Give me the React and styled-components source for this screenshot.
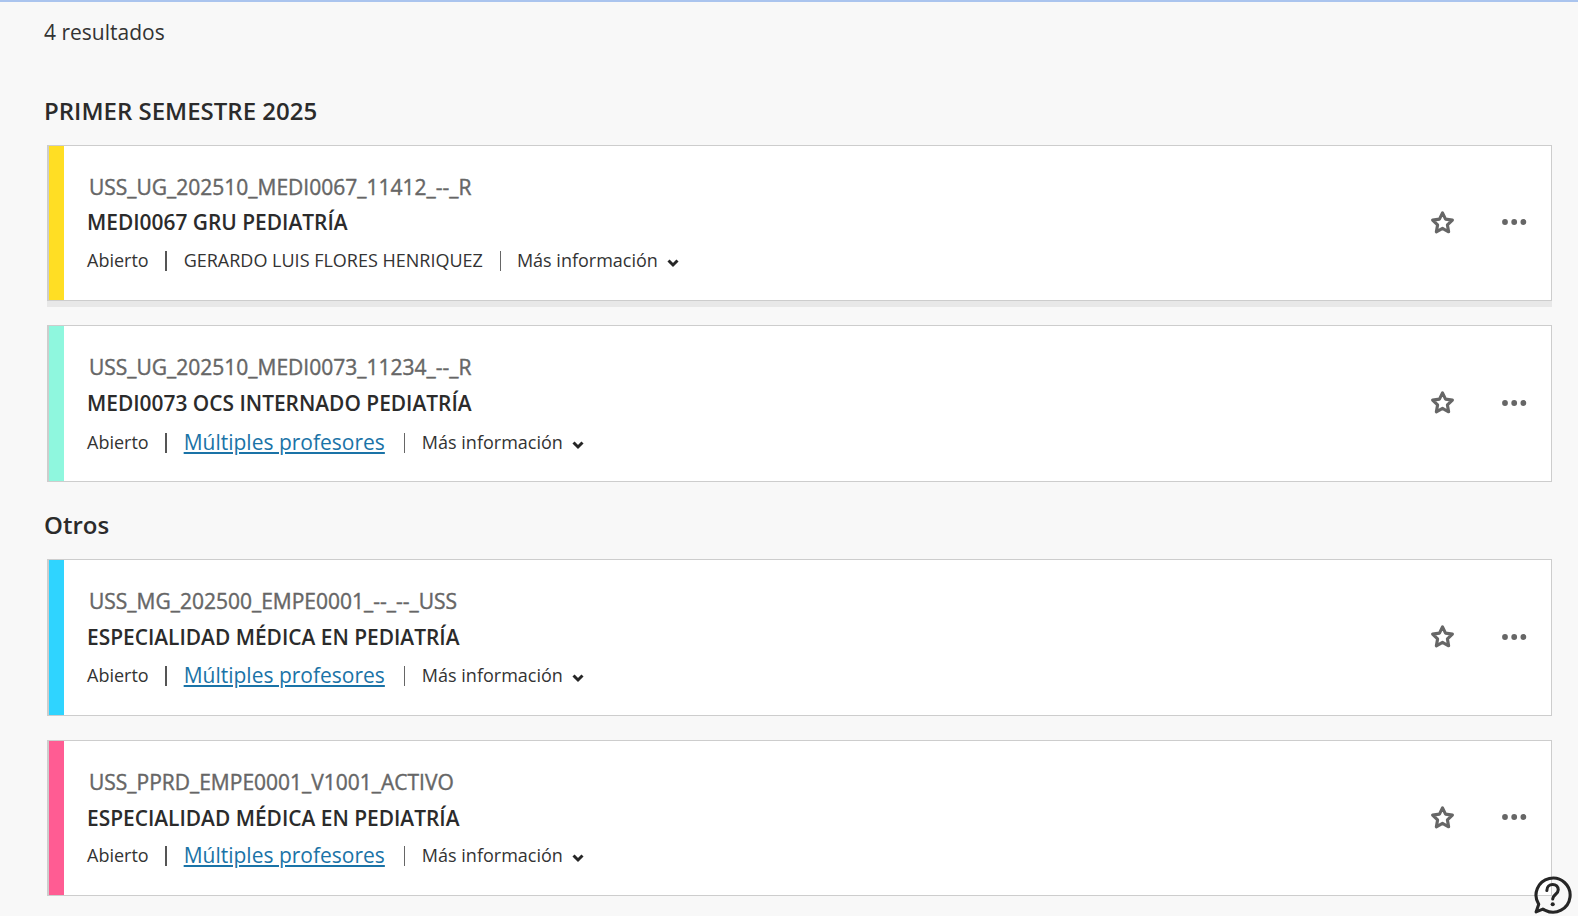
import React from "react";
import styled, { createGlobalStyle } from "styled-components";

const Global = createGlobalStyle`
    html, body {
        margin: 0;
        padding: 0;
        background: #f8f8f8;
        font-family: "Open Sans", sans-serif;
        color: #262626;
    }
`;

const Page = styled.div`
    position: relative;
    height: 916px;
    overflow: hidden;
    box-sizing: border-box;
    border-top: 2px solid #aac4ee;
    padding: 0 26px 0 44px;
`;

const Results = styled.p`
    margin: 0;
    padding-top: 16px;
    font-size: 21px;
    line-height: 28px;
    color: #333;
`;

const Term = styled.h2`
    margin: ${(p) => p.$top}px 0 ${(p) => p.$bottom}px;
    font-size: 24px;
    line-height: 30px;
    font-weight: 600;
    color: #2b2b2b;
`;

const Card = styled.div`
    display: flex;
    align-items: stretch;
    height: ${(p) => p.$height}px;
    margin: 0 0 ${(p) => p.$gap}px 3px;
    box-sizing: border-box;
    background: #fff;
    border: 1px solid #cdcdcd;
    border-left-width: 2px;
    box-shadow: ${(p) => (p.$raised ? "0 6px 0 #e8e8e8" : "none")};
`;

const Stripe = styled.div`
    flex: 0 0 15px;
    background: ${(p) => p.$color};
`;

const Body = styled.div`
    flex: 1;
    min-width: 0;
    padding: 27px 0 0 23px;
`;

const Code = styled.div`
    margin-left: 2px;
    font-size: 21px;
    line-height: 28px;
    color: #666;
    -webkit-text-stroke: 0.4px #666;
`;

const Title = styled.div`
    margin-top: ${(p) => p.$gap}px;
    font-size: 20.9px;
    line-height: 28px;
    font-weight: 600;
    color: #2b2b2b;
`;

const Meta = styled.div`
    display: flex;
    align-items: center;
    margin-top: ${(p) => p.$gap}px;
    height: 28px;
    font-size: 18px;
    color: #333;
`;

const Divider = styled.span`
    width: ${(p) => (p.$strong ? 2 : 1)}px;
    height: 20px;
    margin: 2px ${(p) => p.$right}px 0 ${(p) => p.$left}px;
    background: ${(p) => (p.$strong ? "#555" : "#666")};
`;

const Teacher = styled.a`
    font-size: 21px;
    color: #1a73a7;
    text-decoration: underline;
`;

const More = styled.span`
    display: inline-flex;
    align-items: center;
    gap: 8px;
`;

const Caret = styled.svg`
    margin-top: 5px;
`;

const Actions = styled.div`
    display: flex;
    align-items: center;
    gap: 44px;
    padding: 0 23px 2px 0;
`;

const IconButton = styled.span`
    display: flex;
    align-items: center;
    justify-content: center;
    width: 28px;
    height: 28px;
    color: #666;
`;

const Help = styled.span`
    position: absolute;
    right: 6px;
    bottom: 2px;
    display: flex;
    color: #262626;
`;

const Star = () => (
    <svg width="25" height="25" viewBox="0 0 24 24" fill="none" stroke="currentColor" strokeWidth="3" strokeLinejoin="round">
        <path d="M12 2.8l2.9 6 6.6.9-4.8 4.6 1.2 6.6L12 17.7l-5.9 3.2 1.2-6.6-4.8-4.6 6.6-.9z" />
    </svg>
);

const Dots = () => (
    <svg width="26" height="8" viewBox="0 0 26 8" fill="currentColor">
        <circle cx="4" cy="4" r="2.9" />
        <circle cx="13.2" cy="4" r="2.9" />
        <circle cx="22.4" cy="4" r="2.9" />
    </svg>
);

const Chevron = () => (
    <Caret width="14" height="10" viewBox="0 0 14 10" fill="none" stroke="#262626" strokeWidth="3">
        <path d="M2.5 2.5L7 7l4.5-4.5" />
    </Caret>
);

const HelpIcon = () => (
    <svg width="39" height="39" viewBox="0 0 38 38" fill="none" stroke="currentColor" strokeWidth="3">
        <path d="M3 36l2.6-7.4A16.6 16.6 0 1 1 12 34.4a16.6 16.6 0 0 1-2.4-1.2z" strokeLinejoin="round" />
        <path d="M13.5 15c0-3.4 2.6-5.8 5.7-5.8s5.4 2.2 5.4 5.2c0 4.6-5.4 4.6-5.4 9" strokeLinecap="round" />
        <circle cx="19.2" cy="28.5" r="2" fill="currentColor" stroke="none" />
    </svg>
);

const CourseCard = ({ color, code, title, teacher, multiple, raised, height, gap, titleGap, metaGap }) => (
    <Card $raised={raised} $height={height} $gap={gap}>
        <Stripe $color={color} />
        <Body>
            <Code>{code}</Code>
            <Title $gap={titleGap}>{title}</Title>
            <Meta $gap={metaGap}>
                <span>Abierto</span>
                <Divider $strong $left={16} $right={17} />
                {multiple ? <Teacher href="#">{teacher}</Teacher> : <span>{teacher}</span>}
                <Divider $left={multiple ? 19 : 17} $right={multiple ? 17 : 16} />
                <More>
                    Más información
                    <Chevron />
                </More>
            </Meta>
        </Body>
        <Actions>
            <IconButton><Star /></IconButton>
            <IconButton><Dots /></IconButton>
        </Actions>
    </Card>
);

const App = () => {
    return (
        <>
            <Global />
            <Page>
                <Results>4 resultados</Results>
                <Term $top={50} $bottom={19}>PRIMER SEMESTRE 2025</Term>
                <CourseCard
                    raised
                    color="#ffde24"
                    code="USS_UG_202510_MEDI0067_11412_--_R"
                    title="MEDI0067 GRU PEDIATRÍA"
                    teacher="GERARDO LUIS FLORES HENRIQUEZ"
                    height={156}
                    gap={24}
                    titleGap={7}
                    metaGap={10}
                />
                <CourseCard
                    color="#8ff7de"
                    code="USS_UG_202510_MEDI0073_11234_--_R"
                    title="MEDI0073 OCS INTERNADO PEDIATRÍA"
                    teacher="Múltiples profesores"
                    multiple
                    height={157}
                    gap={28}
                    titleGap={8}
                    metaGap={11}
                />
                <Term $top={0} $bottom={19}>Otros</Term>
                <CourseCard
                    color="#2fd4ff"
                    code="USS_MG_202500_EMPE0001_--_--_USS"
                    title="ESPECIALIDAD MÉDICA EN PEDIATRÍA"
                    teacher="Múltiples profesores"
                    multiple
                    height={157}
                    gap={24}
                    titleGap={8}
                    metaGap={10}
                />
                <CourseCard
                    color="#ff5c93"
                    code="USS_PPRD_EMPE0001_V1001_ACTIVO"
                    title="ESPECIALIDAD MÉDICA EN PEDIATRÍA"
                    teacher="Múltiples profesores"
                    multiple
                    height={156}
                    gap={0}
                    titleGap={8}
                    metaGap={9}
                />
                <Help><HelpIcon /></Help>
            </Page>
        </>
    );
};

export default App;
